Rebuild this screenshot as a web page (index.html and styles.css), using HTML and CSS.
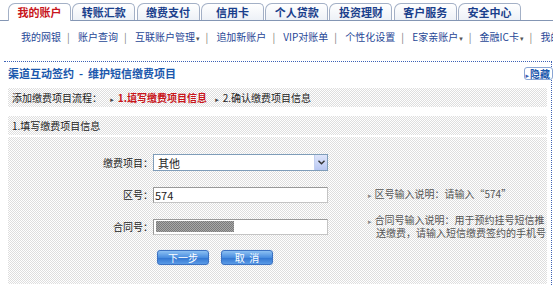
FILE: index.html
```html
<!DOCTYPE html>
<html lang="zh-CN">
<head>
    <meta charset="UTF-8">
    <title>渠道互动签约 - 维护短信缴费项目</title>
    <link rel="stylesheet" href="styles.css">
</head>
<body>
    <div class="tabs">
        <div class="tab active">我的账户</div>
        <div class="tab">转账汇款</div>
        <div class="tab">缴费支付</div>
        <div class="tab">信用卡</div>
        <div class="tab">个人贷款</div>
        <div class="tab">投资理财</div>
        <div class="tab">客户服务</div>
        <div class="tab">安全中心</div>
    </div>

    <div class="subnav">
        <span>我的网银</span><span class="sep">|</span>
        <span>账户查询</span><span class="sep">|</span>
        <span>互联账户管理<i class="caret">▾</i></span><span class="sep">|</span>
        <span>追加新账户</span><span class="sep">|</span>
        <span>VIP对账单</span><span class="sep">|</span>
        <span>个性化设置</span><span class="sep">|</span>
        <span>E家亲账户<i class="caret">▾</i></span><span class="sep">|</span>
        <span>金融IC卡<i class="caret">▾</i></span><span class="sep">|</span>
        <span>我的e账户</span>
    </div>

    <div class="panel">
        <div class="panel-head">
            <div class="panel-title">渠道互动签约 &nbsp;-&nbsp; 维护短信缴费项目</div>
            <div class="hide-btn"><i class="tri">▸</i>隐藏</div>
        </div>

        <div class="flow">
            添加缴费项目流程：
            <i class="arrow">▸</i><span class="current">1.填写缴费项目信息</span>
            <i class="arrow">▸</i><span>2.确认缴费项目信息</span>
        </div>

        <div class="section-title">1.填写缴费项目信息</div>

        <div class="form">
            <div class="row">
                <label>缴费项目：</label>
                <div class="field select">
                    <span>其他</span>
                    <span class="select-btn">
                        <svg width="7" height="5" viewBox="0 0 7 5"><path d="M0.5 0.8 L3.5 3.8 L6.5 0.8" fill="none" stroke="#333" stroke-width="1.4"/></svg>
                    </span>
                </div>
                <div class="hint"></div>
            </div>
            <div class="row">
                <label>区号：</label>
                <div class="field input">574</div>
                <div class="hint"><i class="arrow">▸</i>区号输入说明：请输入“574”</div>
            </div>
            <div class="row">
                <label>合同号：</label>
                <div class="field input"><span class="masked"></span></div>
                <div class="hint"><i class="arrow">▸</i>合同号输入说明：用于预约挂号短信推<br>送缴费，请输入短信缴费签约的手机号</div>
            </div>
            <div class="buttons">
                <button class="btn">下一步</button>
                <button class="btn">取 &nbsp;消</button>
            </div>
        </div>
    </div>
</body>
</html>
```

FILE: styles.css
```css
body {
    margin: 0;
    padding: 0;
    width: 553px;
    height: 286px;
    overflow: hidden;
    background-color: #fff;
    font-family: "Noto Sans CJK SC", "DejaVu Sans", sans-serif;
    font-size: 10px;
    color: #222;
}

/* top tabs */
.tabs {
    display: flex;
    align-items: flex-end;
    gap: 1.3px;
    height: 21px;
    padding-left: 8px;
    border-bottom: 1px solid #8496b4;
    box-sizing: border-box;
}

.tab {
    width: 63px;
    height: 17px;
    box-sizing: border-box;
    border: 1px solid #a3b0c6;
    border-bottom: none;
    border-radius: 7px 5px 0 0;
    background: linear-gradient(#ffffff, #edf1f7);
    text-align: center;
    font-size: 11px;
    font-weight: bold;
    line-height: 16px;
    color: #1a3f8c;
}

    .tab.active {
        height: 18px;
        margin-bottom: -1px;
        background: #fff;
        color: #c8151b;
    }

/* sub navigation */
.subnav {
    margin-top: 8px;
    padding-left: 21px;
    height: 16px;
    line-height: 16px;
    white-space: nowrap;
    overflow: hidden;
    color: #1f4796;
}

    .subnav .sep {
        margin: 0 6px;
        color: #7a7a7a;
    }

.caret {
    font-style: normal;
    font-size: 7px;
    color: #555;
    margin-left: 1px;
}

/* main panel */
.panel {
    margin: 16px 0 0 4px;
    width: 548px;
    height: 224px;
    box-sizing: border-box;
    border-top: 1px dotted #3d62b5;
    border-right: 1px dotted #3d62b5;
}

.panel-head {
    display: flex;
    justify-content: space-between;
    align-items: center;
    height: 22px;
    padding-left: 4px;
}

.panel-title {
    font-size: 11px;
    font-weight: bold;
    color: #1b58ad;
}

.hide-btn {
    margin-right: -2px;
    width: 29px;
    height: 13px;
    box-sizing: border-box;
    border: 1px solid #8aa6d4;
    border-radius: 3px;
    background: #fff;
    font-size: 10px;
    font-weight: bold;
    line-height: 11px;
    color: #1b58ad;
    text-align: right;
    padding-right: 2px;
}

    .hide-btn .tri {
        font-style: normal;
        font-size: 7px;
        color: #3d62b5;
        margin-right: 1px;
    }

.flow,
.section-title,
.form {
    margin-left: 4px;
    width: 539px;
    background: repeating-conic-gradient(#dedede 0 25%, #fff 0 50%) 0 0 / 2px 2px;
}

.flow {
    margin-top: 4px;
    height: 19px;
    line-height: 19px;
    padding-left: 4px;
    box-sizing: border-box;
    white-space: nowrap;
}

    .flow .current {
        color: #c8151b;
        font-weight: bold;
    }

.arrow {
    font-style: normal;
    font-size: 7px;
    color: #444;
    margin: 0 4px 0 6px;
}

.section-title {
    margin-top: 9px;
    height: 19px;
    line-height: 19px;
    padding-left: 4px;
    box-sizing: border-box;
}

/* form */
.form {
    margin-top: 2px;
    height: 147px;
    padding-top: 17px;
    box-sizing: border-box;
}

.row {
    display: grid;
    grid-template-columns: 145px 175px 1fr;
    grid-template-rows: 17px;
    align-items: center;
    margin-bottom: 15px;
}

    .row label {
        text-align: right;
    }

.field {
    height: 16px;
    box-sizing: border-box;
    background: #fff;
    font-size: 11px;
    line-height: 14px;
}

.select {
    height: 17px;
    display: flex;
    justify-content: space-between;
    align-items: center;
    border: 1px solid #7f9db9;
    padding-left: 4px;
}

.select-btn {
    width: 12px;
    height: 15px;
    display: flex;
    align-items: center;
    justify-content: center;
    background: linear-gradient(#dfe6fb, #b8c7f2);
    border-left: 1px solid #c3d0f0;
}

.input {
    border: 1px solid #c4c4c4;
    border-top-color: #999;
    border-left-color: #999;
    padding-left: 1px;
}

.masked {
    display: inline-block;
    margin: 1px 0 0 1px;
    width: 78px;
    height: 11px;
    background: repeating-conic-gradient(#7a7a7a 0 25%, #a8a8a8 0 50%) 0 0 / 2px 2px;
}

.hint {
    margin-left: 40px;
    padding-left: 8px;
    text-indent: -8px;
    color: #555;
    line-height: 12px;
}

    .hint .arrow {
        margin: 0 3px 0 0;
        color: #888;
    }

.buttons {
    display: flex;
    gap: 12px;
    margin: 11px 0 0 149px;
}

.btn {
    width: 52px;
    height: 15px;
    padding: 0;
    border: 1px solid #3c72c2;
    border-radius: 3px;
    background: linear-gradient(#8cc0f2, #4a8ee0 50%, #2f74d0 51%, #5a9ae6);
    box-shadow: 0 0 1px #9cc3ef;
    color: #fff;
    font-family: "Noto Sans CJK SC", sans-serif;
    font-size: 10px;
    line-height: 13px;
    cursor: pointer;
}

    .btn:hover {
        background: #2f74d0;
    }
```
